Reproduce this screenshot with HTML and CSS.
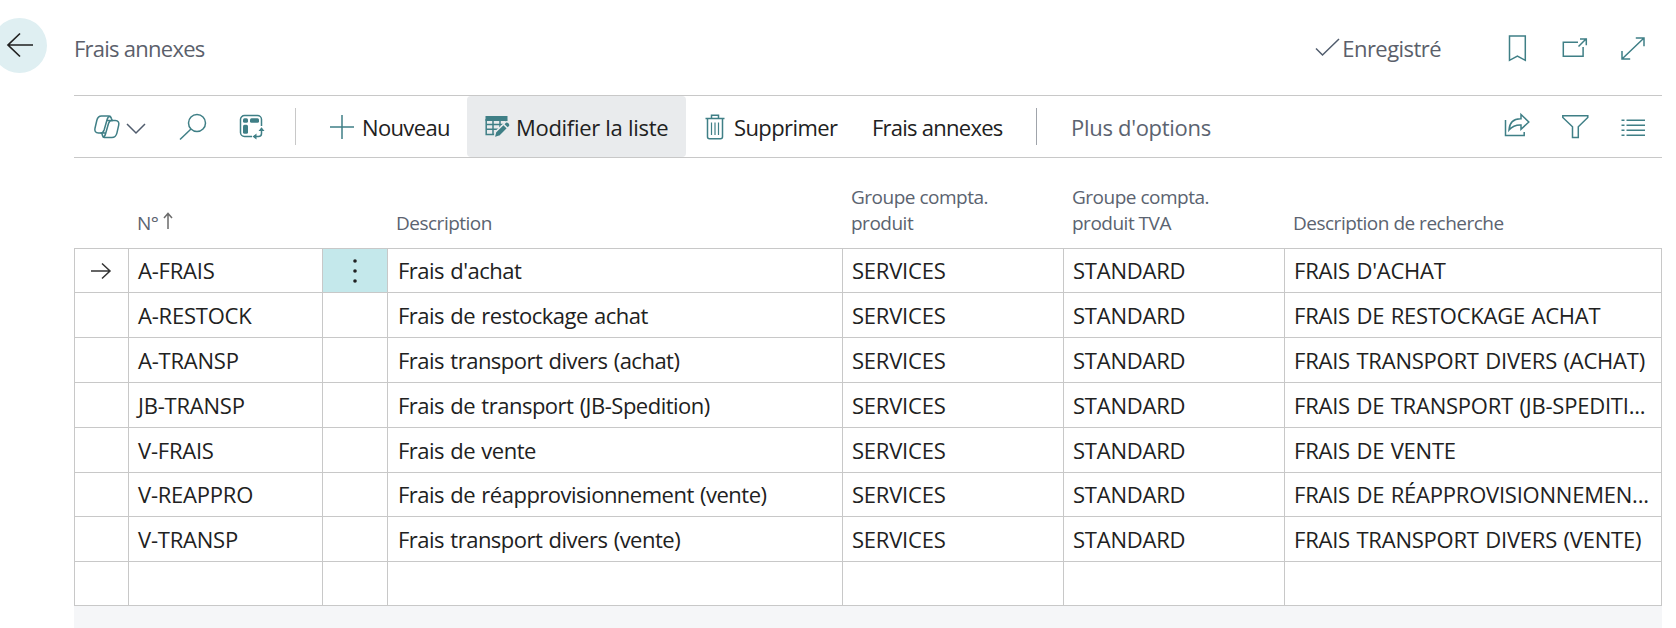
FILE: index.html
```
<!DOCTYPE html>
<html lang="fr">

<head>
    <meta charset="UTF-8">
    <meta name="viewport" content="width=device-width, initial-scale=1.0">
    <title>Frais annexes</title>
    <link rel="stylesheet" href="styles.css">
</head>

<body>
    <div class="page">
        <button class="back" aria-label="Retour">
            <svg width="28" height="28" viewBox="0 0 28 28"><path d="M27 14H2M14 2.5L2 14l12 11.5"/></svg>
        </button>

        <main class="content">
            <header class="header">
                <h1>Frais annexes</h1>
                <div class="status">
                    <svg width="26" height="20" viewBox="0 0 26 20"><path d="M1 10.5l6.500 6.500L24 1"/></svg>
                    <span>Enregistré</span>
                </div>
                <div class="icons">
                    <svg width="28" height="28" viewBox="0 0 28 28"><path d="M6.500 2h15.800v24.300L14.400 22l-7.900 4.300z"/></svg>
                    <svg width="28" height="28" viewBox="0 0 28 28"><path d="M17 8.300H2.300v13.900h19.800V13M17.500 12.500l8-8M19 5h6.300v6.300"/></svg>
                    <svg width="28" height="28" viewBox="0 0 28 28"><path d="M3 25L25 4M16.800 4H25v8.200M3 17v8h8.200"/></svg>
                </div>
            </header>

            <nav class="toolbar">
                <svg class="copilot" width="28" height="26" viewBox="0 0 28 26">
                    <path d="M8.500 2h6.800c1.600 0 2.600.7 3 2.200l.8 2.300h3.200c3 0 4 2 3.400 4.600l-1.800 8c-.8 3-2.400 4.400-5 4.400h-6.500c-1.600 0-2.600-.8-3-2.300L8.800 19H5.500c-3 0-4.200-2-3.500-4.800l1.800-7.700C4.500 3.500 6 2 8.500 2z"/>
                    <path d="M17.500 2.300c-1.800 0-2.700 1-3.300 3l-3 10.500C10.500 18 9.500 19 7.500 19M19.300 6.500c-2.200 0-3.200 1-3.800 3l-3 10.500c-.6 2-1.400 3.200-2.700 3.200M14 6.500h6M8.500 19h5"/>
                </svg>
                <svg class="chevron" width="20" height="12" viewBox="0 0 20 12"><path d="M1 1l9 9 9-9"/></svg>
                <svg class="search" width="28" height="28" viewBox="0 0 28 28"><circle cx="18" cy="10" r="8.500"/><path d="M12 16L1 26.500"/></svg>
                <svg class="layout" width="26" height="26" viewBox="0 0 26 26">
                    <path d="M13 22.500H5.500A4 4 0 0 1 1.500 18.500V5.500a4 4 0 0 1 4-4h13a4 4 0 0 1 4 4V12"/>
                    <path d="M22.500 15v4.500a3 3 0 0 1-3 3H15"/>
                    <path class="fill" d="M19.500 17l3-3.800 3 3.800zM17.500 19.500v6L13.500 22.500z"/>
                    <rect class="fill" x="4" y="4.300" width="5" height="4.500" rx="1.500"/>
                    <rect class="fill" x="11" y="4.300" width="9" height="4.500" rx="1.500"/>
                    <rect class="fill" x="4" y="10.800" width="5" height="9" rx="1.500"/>
                </svg>
                <span class="divider"></span>
                <button class="action new">
                    <svg width="26" height="26" viewBox="0 0 26 26"><path d="M13 1v24M1 13h24"/></svg>
                    <span>Nouveau</span>
                </button>
                <button class="action edit active">
                    <svg width="26" height="24" viewBox="0 0 26 24">
                        <path d="M1.200 4v15.500h9M1.200 9.500h21M1.200 14.300h14M8 5v14.500M15 5v9M21.300 4v4"/>
                        <path class="fill" d="M.5 1h22v5H.5z"/>
                        <path class="pencil" d="M9 23l1.500-6L20.500 7.200c2-1.500 5.500 1.500 4.200 4L15 21z"/>
                        <path class="cut" d="M18.500 9.200l4.200 4.200"/>
                    </svg>
                    <span>Modifier la liste</span>
                </button>
                <button class="action delete">
                    <svg width="20" height="26" viewBox="0 0 20 26"><path d="M.5 4.500h19M6.500 4.500V1.300h7v3.200M2.500 4.500v18.300q0 2 2 2h11q2 0 2-2V4.500"/><path class="thin" d="M6.500 8.500v12.500M10 8.500v12.500M13.500 8.500v12.500"/></svg>
                    <span>Supprimer</span>
                </button>
                <button class="action related">Frais annexes</button>
                <span class="divider dark"></span>
                <button class="action more">Plus d'options</button>
                <div class="icons">
                    <svg width="28" height="28" viewBox="0 0 28 28"><path d="M2.500 8v15.500h18.700V20M6 18c.5-7.500 5-11.500 12-11.300V2.500l7.800 7.500-7.800 7.300v-4.400c-5-.2-8.500 1-12 5.100z"/></svg>
                    <svg width="28" height="28" viewBox="0 0 28 28"><path d="M1.800 3.800h25v1.700l-9.500 9.300v10.700h-5.800V14.800L1.800 5.500z"/></svg>
                    <svg width="28" height="28" viewBox="0 0 28 28"><path d="M7.500 8.300H26M7.500 13.300H26M7.500 18.300H26M7.500 23.300H26M2.500 8.300h3M2.500 13.300h3M2.500 18.300h3M2.500 23.300h3"/></svg>
                </div>
            </nav>

            <table class="list">
                <colgroup>
                    <col class="col-mark">
                    <col class="col-no">
                    <col class="col-menu">
                    <col class="col-desc">
                    <col class="col-group">
                    <col class="col-group">
                    <col class="col-search">
                </colgroup>
                <thead>
                    <tr>
                        <th></th>
                        <th>N° <svg class="sort" width="10" height="18" viewBox="0 0 10 18"><path d="M5 17V2M1 6l4-4.500L9 6"/></svg></th>
                        <th></th>
                        <th>Description</th>
                        <th>Groupe compta.<br>produit</th>
                        <th>Groupe compta.<br>produit TVA</th>
                        <th>Description de recherche</th>
                    </tr>
                </thead>
                <tbody>
                    <tr>
                        <td class="mark"><svg width="22" height="18" viewBox="0 0 22 18"><path d="M1 9h19M12 1.500L20 9l-8 7.500"/></svg></td>
                        <td class="caps">A-FRAIS</td>
                        <td class="menu"><svg width="6" height="26" viewBox="0 0 6 26"><circle cx="3" cy="3" r="1.800"/><circle cx="3" cy="13" r="1.800"/><circle cx="3" cy="23" r="1.800"/></svg></td>
                        <td>Frais d'achat</td>
                        <td class="caps">SERVICES</td>
                        <td class="caps">STANDARD</td>
                        <td class="caps">FRAIS D'ACHAT</td>
                    </tr>
                    <tr>
                        <td></td>
                        <td class="caps">A-RESTOCK</td>
                        <td></td>
                        <td>Frais de restockage achat</td>
                        <td class="caps">SERVICES</td>
                        <td class="caps">STANDARD</td>
                        <td class="caps">FRAIS DE RESTOCKAGE ACHAT</td>
                    </tr>
                    <tr>
                        <td></td>
                        <td class="caps">A-TRANSP</td>
                        <td></td>
                        <td>Frais transport divers (achat)</td>
                        <td class="caps">SERVICES</td>
                        <td class="caps">STANDARD</td>
                        <td class="caps">FRAIS TRANSPORT DIVERS (ACHAT)</td>
                    </tr>
                    <tr>
                        <td></td>
                        <td class="caps">JB-TRANSP</td>
                        <td></td>
                        <td>Frais de transport (JB-Spedition)</td>
                        <td class="caps">SERVICES</td>
                        <td class="caps">STANDARD</td>
                        <td class="caps">FRAIS DE TRANSPORT (JB-SPEDITI...</td>
                    </tr>
                    <tr>
                        <td></td>
                        <td class="caps">V-FRAIS</td>
                        <td></td>
                        <td>Frais de vente</td>
                        <td class="caps">SERVICES</td>
                        <td class="caps">STANDARD</td>
                        <td class="caps">FRAIS DE VENTE</td>
                    </tr>
                    <tr>
                        <td></td>
                        <td class="caps">V-REAPPRO</td>
                        <td></td>
                        <td>Frais de réapprovisionnement (vente)</td>
                        <td class="caps">SERVICES</td>
                        <td class="caps">STANDARD</td>
                        <td class="caps">FRAIS DE RÉAPPROVISIONNEMEN...</td>
                    </tr>
                    <tr>
                        <td></td>
                        <td class="caps">V-TRANSP</td>
                        <td></td>
                        <td>Frais transport divers (vente)</td>
                        <td class="caps">SERVICES</td>
                        <td class="caps">STANDARD</td>
                        <td class="caps">FRAIS TRANSPORT DIVERS (VENTE)</td>
                    </tr>
                    <tr>
                        <td></td>
                        <td></td>
                        <td></td>
                        <td></td>
                        <td></td>
                        <td></td>
                        <td></td>
                    </tr>
                </tbody>
            </table>
            <div class="list-end"></div>
        </main>
    </div>
</body>

</html>
```
FILE: styles.css
```
* {
    box-sizing: border-box;
}

body {
    margin: 0;
    font-family: "Open Sans", "Noto Sans", sans-serif;
    font-size: 22px;
    letter-spacing: -0.75px;
    color: #212121;
    background-color: #fff;
    overflow: hidden;
}

svg {
    display: block;
    flex: none;
    fill: none;
    stroke: #3f7f86;
    stroke-width: 1.5;
}

svg .fill {
    fill: #3f7f86;
    stroke: none;
}

button {
    border: none;
    padding: 0;
    background: none;
    color: inherit;
    font: inherit;
    letter-spacing: inherit;
    cursor: pointer;
}

.page {
    display: flex;
    height: 628px;
}

.back {
    flex: none;
    display: flex;
    align-items: center;
    justify-content: center;
    width: 55px;
    height: 55px;
    margin: 18px 27px 0 -8px;
    padding-bottom: 1px;
    border-radius: 50%;
    background-color: #dfeff2;
}

.back svg {
    stroke: #212121;
    stroke-width: 1.7;
}

.content {
    display: flex;
    flex-direction: column;
    width: 1588px;
}

.header {
    display: flex;
    align-items: center;
    height: 95px;
    color: #5b5f6b;
}

h1 {
    flex: 1;
    margin: 1px 0 0;
    font-size: 22px;
    font-weight: 400;
}

.status {
    display: flex;
    align-items: center;
    gap: 1px;
    margin-right: 62px;
    letter-spacing: -0.55px;
}

.status span {
    margin-top: 1px;
}

.status svg {
    stroke: #505c6d;
}

.icons {
    display: flex;
    gap: 30px;
    margin-right: 15px;
}

.toolbar {
    display: flex;
    align-items: center;
    height: 63px;
    padding-left: 19px;
    border-top: 1px solid #c8c8c8;
    border-bottom: 1px solid #c8c8c8;
}

.chevron {
    margin: 5px 33px 0 5px;
    stroke: #505c6d;
}

.search {
    margin-right: 32px;
}

.divider {
    width: 1px;
    height: 37px;
    margin: 0 33px 0 30px;
    background-color: #c8c8c8;
}

.divider.dark {
    margin: 0 34px 0 33px;
    background-color: #a0a4ab;
}

.action {
    display: flex;
    align-items: center;
    height: 61px;
    white-space: nowrap;
}

.new {
    width: 138px;
    gap: 7px;
    letter-spacing: -0.65px;
}

.edit {
    width: 219px;
    padding-left: 18px;
    gap: 5px;
    letter-spacing: -0.3px;
}

.edit.active {
    border-radius: 4px;
    background-color: #e9ebed;
}

.edit .pencil {
    fill: #3f7f86;
    stroke: #e9ebed;
}

.edit .cut {
    stroke: #e9ebed;
}

.delete {
    width: 186px;
    padding-left: 19px;
    gap: 9px;
    letter-spacing: -0.6px;
}

.delete .thin {
    stroke-width: 1.2;
}

.related {
    width: 131px;
}

.more {
    color: #5b6370;
    letter-spacing: -0.3px;
}

.toolbar .icons {
    margin-left: auto;
    padding-bottom: 2px;
}

.list {
    width: 1588px;
    table-layout: fixed;
    border-collapse: separate;
    border-spacing: 0;
}

.col-mark { width: 55px; }
.col-no { width: 194px; }
.col-menu { width: 65px; }
.col-desc { width: 455px; }
.col-group { width: 221px; }
.col-search { width: 377px; }

th {
    height: 91px;
    padding: 0 0 12px 8px;
    border-bottom: 1px solid #c8c8c8;
    color: #5b6370;
    font-size: 19px;
    font-weight: 400;
    line-height: 26px;
    letter-spacing: -0.5px;
    text-align: left;
    vertical-align: bottom;
    white-space: nowrap;
}

.sort {
    display: inline-block;
    stroke: #6b6b6b;
}

td {
    height: 45px;
    padding: 0 0 1px 10px;
    border-right: 1px solid #c8c8c8;
    border-bottom: 1px solid #c8c8c8;
    line-height: 30px;
    letter-spacing: -0.5px;
    word-spacing: 1px;
    white-space: nowrap;
}

td:first-child {
    border-left: 1px solid #c8c8c8;
}

/* 357px of body height shared by eight rows */
tbody tr:nth-child(1) td,
tbody tr:nth-child(6) td,
tbody tr:nth-child(8) td {
    height: 44px;
}

td.caps {
    padding-left: 9px;
    letter-spacing: -0.22px;
}

td.mark {
    padding: 0 2px 0 0;
}

.mark svg {
    margin: 0 auto;
    stroke: #333;
}

td.menu {
    padding: 0;
    background-color: #c4e8eb;
}

.menu svg {
    margin: 0 auto;
    fill: #212121;
    stroke: none;
}

.list-end {
    flex: 1;
    background-color: #f5f6f8;
}
```
